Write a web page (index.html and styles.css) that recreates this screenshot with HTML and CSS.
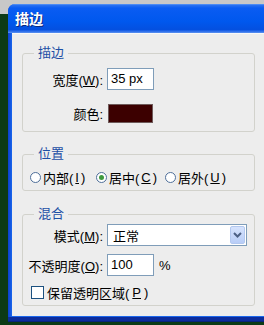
FILE: index.html
```html
<!DOCTYPE html>
<html lang="zh-CN">
<head>
    <meta charset="UTF-8">
    <title>描边</title>
    <link rel="stylesheet" href="styles.css">
</head>
<body>

    <div class="dialog">
        <div class="titlebar">描边</div>

        <div class="content">
            <fieldset class="group group-stroke">
                <legend>描边</legend>
                <div class="fields">
                    <span class="label">宽度(<u>W</u>):</span>
                    <div class="input input-size">35 px</div>

                    <span class="label">颜色:</span>
                    <div class="swatch"></div>
                </div>
            </fieldset>

            <fieldset class="group group-position">
                <legend>位置</legend>
                <div class="radios">
                    <span class="radio-item item-inside"><span class="radio"></span>内部(<u>I</u>)</span>
                    <span class="radio-item item-center"><span class="radio checked"></span>居中(<u>C</u>)</span>
                    <span class="radio-item"><span class="radio"></span>居外(<u>U</u>)</span>
                </div>
            </fieldset>

            <fieldset class="group group-blend">
                <legend>混合</legend>
                <div class="fields">
                    <span class="label">模式(<u>M</u>):</span>
                    <div class="select">
                        <span class="select-text">正常</span>
                        <span class="select-btn">
                            <svg width="9" height="6" viewBox="0 0 9 6"><path d="M1 1 L4.5 4.5 L8 1" fill="none" stroke="#4d6185" stroke-width="2"/></svg>
                        </span>
                    </div>

                    <span class="label">不透明度(<u>O</u>):</span>
                    <div class="with-unit">
                        <div class="input input-size">100</div>
                        <span class="unit">%</span>
                    </div>
                </div>
                <div class="check-row">
                    <span class="checkbox"></span>保留透明区域(<u>P</u>)
                </div>
            </fieldset>
        </div>
    </div>

</body>
</html>
```

FILE: styles.css
```css
* {
    box-sizing: border-box;
}

html,
body {
    margin: 0;
    height: 100%;
    overflow: hidden;
}

body {
    background: linear-gradient(#c8c8c8 0 14px, #0c3a16 14px);
    font-family: "Liberation Sans", "Noto Sans CJK SC", sans-serif;
    font-size: 13px;
    color: #000;
    text-autospace: no-autospace;
}

.dialog {
    margin: 4px 0 0 8px;
    width: 300px;
    background: linear-gradient(to right, #0a3fcf, #1a66ec 4px);
    border-radius: 7px 7px 0 0;
    padding-bottom: 5px;
    border-bottom: 1px solid #08237a;
    box-shadow: inset 0 -4px 0 #0b2c9c;
}

.titlebar {
    height: 29px;
    padding: 3px 0 0 7px;
    border-radius: 7px 7px 0 0;
    background: linear-gradient(#6aa2f8 0, #2c73f0 1px, #0a5cf2 4px, #0058ee 60%, #0450e0 88%, #2a6cea 94%, #5e94f0 100%);
    color: #fff;
    font-weight: bold;
    font-size: 14px;
    line-height: 24px;
    text-shadow: 1px 1px 0 #0b2a80;
}

.content {
    margin-left: 4px;
    background: #ededed;
    padding: 11px 0 10px 10px;
    border-top: 1px solid #f8f8f8;
}

.group {
    margin: 0;
    padding: 7px 0 8px 0;
    width: 233px;
    min-width: 0;
    border: 1px solid #d2d2cc;
    border-radius: 3px;
}

.group legend {
    margin-left: 11px;
    padding: 0 4px;
    line-height: 16px;
    color: #1d4fa5;
}

.group-position {
    margin-top: 14px;
    padding-bottom: 5px;
}

.group-blend {
    margin-top: 15px;
    padding-top: 2px;
    padding-bottom: 5px;
}

.fields {
    display: grid;
    grid-template-columns: 80px auto;
    column-gap: 4px;
    row-gap: 14px;
    align-items: center;
}

.group-blend .fields {
    row-gap: 8px;
}

.label {
    text-align: right;
    white-space: nowrap;
}

.input {
    height: 22px;
    background: #fff;
    border: 1px solid #7f9db9;
    padding-left: 3px;
    line-height: 20px;
}

.input-size {
    width: 47px;
}

.swatch {
    width: 45px;
    height: 19px;
    margin-left: 1px;
    background: #3c0000;
    border: 1px solid #6e5a5a;
}

.radios {
    display: flex;
    align-items: center;
    height: 16px;
    padding-left: 7px;
    white-space: nowrap;
}

.radio-item {
    display: flex;
    align-items: center;
    gap: 2px;
}

.item-inside {
    width: 66px;
}

.item-center {
    width: 69px;
}

.radio {
    width: 11px;
    height: 11px;
    border: 1px solid #4f6f9a;
    border-radius: 50%;
    background: #fff;
    display: flex;
    align-items: center;
    justify-content: center;
}

.radio.checked::after {
    content: "";
    width: 5px;
    height: 5px;
    border-radius: 50%;
    background: #3f9a3f;
}

.select {
    width: 140px;
    height: 22px;
    background: #fff;
    border: 1px solid #7f9db9;
    display: flex;
    align-items: center;
    justify-content: space-between;
    padding: 1px;
}

.select-text {
    padding-left: 4px;
}

.select-btn {
    width: 15px;
    height: 18px;
    border: 1px solid #b3c8ef;
    border-radius: 2px;
    background: linear-gradient(#d6e3fd, #b8cdf7);
    display: flex;
    align-items: center;
    justify-content: center;
}

.with-unit {
    display: flex;
    align-items: center;
}

.unit {
    margin-left: 5px;
}

.check-row {
    display: flex;
    align-items: center;
    gap: 3px;
    height: 16px;
    margin-top: 8px;
    padding-left: 8px;
}

.checkbox {
    width: 13px;
    height: 13px;
    border: 1px solid #1c5180;
    background: #fff;
}
```
